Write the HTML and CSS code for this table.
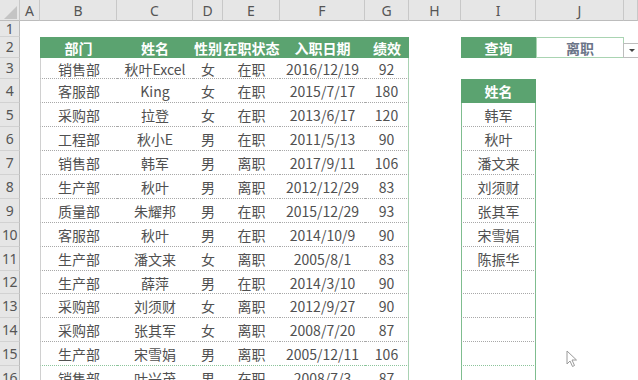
FILE: index.html
```html
<!DOCTYPE html>
<html lang="zh-CN">
<head>
<meta charset="utf-8">
<title>Sheet</title>
<link rel="stylesheet" href="styles.css">
</head>
<body>
<div class="sheet">
  <div class="corner"></div>
  <div class="ch">A</div><div class="ch">B</div><div class="ch">C</div><div class="ch">D</div><div class="ch">E</div><div class="ch">F</div><div class="ch">G</div><div class="ch">H</div><div class="ch">I</div><div class="ch">J</div><div class="ch"></div>

  <div class="rh">1</div><div class="c"></div><div class="c"></div><div class="c"></div><div class="c"></div><div class="c"></div><div class="c"></div><div class="c"></div><div class="c"></div><div class="c"></div><div class="c"></div><div class="c"></div>

  <div class="rh">2</div><div class="c"></div>
  <div class="th">部门</div><div class="th">姓名</div><div class="th">性别</div><div class="th">在职状态</div><div class="th">入职日期</div><div class="th">绩效</div>
  <div class="c"></div><div class="th">查询</div>
  <div class="c query">离职<span class="dd"></span></div><div class="c"></div>

  <div class="rh">3</div><div class="c"></div>
  <div class="td first">销售部</div><div class="td">秋叶Excel</div><div class="td">女</div><div class="td">在职</div><div class="td">2016/12/19</div><div class="td end">92</div>
  <div class="c"></div><div class="c"></div><div class="c"></div><div class="c"></div>

  <div class="rh">4</div><div class="c"></div>
  <div class="td first">客服部</div><div class="td">King</div><div class="td">女</div><div class="td">在职</div><div class="td">2015/7/17</div><div class="td end">180</div>
  <div class="c"></div><div class="th">姓名</div><div class="c"></div><div class="c"></div>

  <div class="rh">5</div><div class="c"></div>
  <div class="td first">采购部</div><div class="td">拉登</div><div class="td">女</div><div class="td">在职</div><div class="td">2013/6/17</div><div class="td end">120</div>
  <div class="c"></div><div class="li">韩军</div><div class="c"></div><div class="c"></div>

  <div class="rh">6</div><div class="c"></div>
  <div class="td first">工程部</div><div class="td">秋小E</div><div class="td">男</div><div class="td">在职</div><div class="td">2011/5/13</div><div class="td end">90</div>
  <div class="c"></div><div class="li">秋叶</div><div class="c"></div><div class="c"></div>

  <div class="rh">7</div><div class="c"></div>
  <div class="td first">销售部</div><div class="td">韩军</div><div class="td">男</div><div class="td">离职</div><div class="td">2017/9/11</div><div class="td end">106</div>
  <div class="c"></div><div class="li">潘文来</div><div class="c"></div><div class="c"></div>

  <div class="rh">8</div><div class="c"></div>
  <div class="td first">生产部</div><div class="td">秋叶</div><div class="td">男</div><div class="td">离职</div><div class="td">2012/12/29</div><div class="td end">83</div>
  <div class="c"></div><div class="li">刘须财</div><div class="c"></div><div class="c"></div>

  <div class="rh">9</div><div class="c"></div>
  <div class="td first">质量部</div><div class="td">朱耀邦</div><div class="td">男</div><div class="td">在职</div><div class="td">2015/12/29</div><div class="td end">93</div>
  <div class="c"></div><div class="li">张其军</div><div class="c"></div><div class="c"></div>

  <div class="rh">10</div><div class="c"></div>
  <div class="td first">客服部</div><div class="td">秋叶</div><div class="td">男</div><div class="td">在职</div><div class="td">2014/10/9</div><div class="td end">90</div>
  <div class="c"></div><div class="li">宋雪娟</div><div class="c"></div><div class="c"></div>

  <div class="rh">11</div><div class="c"></div>
  <div class="td first">生产部</div><div class="td">潘文来</div><div class="td">女</div><div class="td">离职</div><div class="td">2005/8/1</div><div class="td end">83</div>
  <div class="c"></div><div class="li">陈振华</div><div class="c"></div><div class="c"></div>

  <div class="rh">12</div><div class="c"></div>
  <div class="td first">生产部</div><div class="td">薛萍</div><div class="td">男</div><div class="td">在职</div><div class="td">2014/3/10</div><div class="td end">90</div>
  <div class="c"></div><div class="li"></div><div class="c"></div><div class="c"></div>

  <div class="rh">13</div><div class="c"></div>
  <div class="td first">采购部</div><div class="td">刘须财</div><div class="td">女</div><div class="td">离职</div><div class="td">2012/9/27</div><div class="td end">90</div>
  <div class="c"></div><div class="li"></div><div class="c"></div><div class="c"></div>

  <div class="rh">14</div><div class="c"></div>
  <div class="td first">采购部</div><div class="td">张其军</div><div class="td">女</div><div class="td">离职</div><div class="td">2008/7/20</div><div class="td end">87</div>
  <div class="c"></div><div class="li"></div><div class="c"></div><div class="c"></div>

  <div class="rh">15</div><div class="c"></div>
  <div class="td first green">生产部</div><div class="td green">宋雪娟</div><div class="td green">男</div><div class="td green">离职</div><div class="td green">2005/12/11</div><div class="td end green">106</div>
  <div class="c"></div><div class="li green"></div><div class="c"></div><div class="c"></div>

  <div class="rh">16</div><div class="c"></div>
  <div class="td first">销售部</div><div class="td">叶兴茂</div><div class="td">男</div><div class="td">在职</div><div class="td">2008/7/3</div><div class="td end">87</div>
  <div class="c"></div><div class="li"></div><div class="c"></div><div class="c"></div>

  <svg class="cursor" width="12" height="18" viewBox="0 0 12 18" aria-hidden="true">
    <path d="M1 1 L1 14 L4 11 L6.5 16.5 L8.5 15.5 L6 10 L10.5 10 Z" fill="#fff" stroke="#9a9a9a" stroke-width="1" stroke-linejoin="round"/>
  </svg>
</div>
</body>
</html>
```

FILE: styles.css
```css
* { box-sizing: border-box; margin: 0; padding: 0; }
html, body { width: 638px; height: 380px; overflow: hidden; background: #fff; }
body { font-family: "Noto Sans CJK SC", "Noto Sans", sans-serif; }

.sheet {
  position: relative;
  display: grid;
  grid-template-columns: 20px 20px 77px 76px 30px 57px 85px 44px 52px 75px 88px 1fr;
  grid-template-rows: 21px 16px 21px 21px repeat(8, 24px) 23px repeat(4, 24px);
  height: 380px;
  overflow: hidden;
}

.corner {
  position: relative;
  background: #e6e6e6;
  border-right: 1px solid #c8c8c8;
  border-bottom: 1px solid #bcbcbc;
}
.corner::after {
  content: "";
  position: absolute;
  right: 2px;
  bottom: 1px;
  width: 0;
  height: 0;
  border-style: solid;
  border-width: 0 0 13px 13px;
  border-color: transparent transparent #c4c4c4 transparent;
}

.ch {
  background: #e6e6e6;
  border-right: 1px solid #c8c8c8;
  border-bottom: 1px solid #bcbcbc;
  font-family: "Noto Sans", sans-serif;
  font-size: 14px;
  color: #555;
  display: flex;
  align-items: center;
  justify-content: center;
  line-height: 1;
  padding-top: 1px;
}

.rh {
  background: #e6e6e6;
  border-right: 1px solid #bcbcbc;
  border-bottom: 1px solid #d2d2d2;
  font-family: "Noto Sans", sans-serif;
  font-size: 14px;
  color: #555;
  display: flex;
  align-items: center;
  justify-content: center;
  line-height: 1;
  letter-spacing: -0.5px;
}

.c { background: #fff; }

.th {
  background: #5ba370;
  color: #fff;
  font-weight: 700;
  font-size: 14px;
  display: flex;
  align-items: center;
  justify-content: center;
  white-space: nowrap;
  line-height: 1;
}

.td {
  border-bottom: 1px dotted #a8a8a8;
  color: #505050;
  font-size: 14px;
  display: flex;
  align-items: center;
  justify-content: center;
  white-space: nowrap;
  line-height: 1;
  padding-top: 1px;
}
.td.first { border-left: 1px solid #d0d0d0; }
.td.end { border-right: 1px solid #a9d2b3; }
.td.green, .li.green { border-bottom-color: #8cc49b; }

.li {
  border-left: 1px solid #7fbd8f;
  border-right: 1px solid #7fbd8f;
  border-bottom: 1px dotted #a8a8a8;
  color: #505050;
  font-size: 14px;
  display: flex;
  align-items: center;
  justify-content: center;
  line-height: 1;
  padding-top: 1px;
}

.query {
  position: relative;
  border: 1px solid #a9d4b2;
  color: #6b7588;
  font-weight: 700;
  font-size: 14px;
  display: flex;
  align-items: center;
  justify-content: center;
  line-height: 1;
}
.dd {
  position: absolute;
  left: 86px;
  top: 5px;
  width: 16px;
  height: 15px;
  background: #fff;
  border: 1px solid #bdbdbd;
}
.dd::after {
  content: "";
  position: absolute;
  left: 5px;
  top: 5px;
  border-style: solid;
  border-width: 3px 3px 0 3px;
  border-color: #444 transparent transparent transparent;
}

.cursor {
  position: absolute;
  left: 566px;
  top: 350px;
}
```
